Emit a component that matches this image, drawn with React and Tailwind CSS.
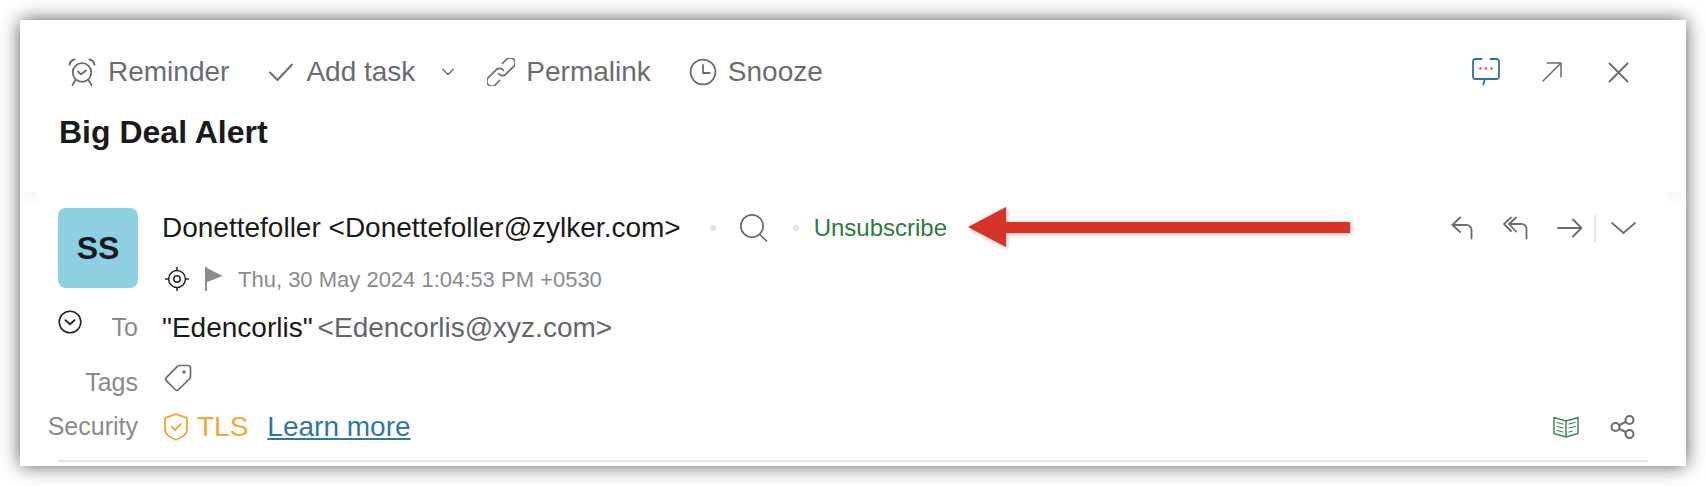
import React from 'react';

const iconGray = '#6b6c72';

const AlarmIcon = () => (
  <svg width="30" height="30" viewBox="0 0 30 30" fill="none" stroke={iconGray} strokeWidth="1.800" strokeLinecap="round" strokeLinejoin="round">
    <circle cx="15" cy="15.500" r="9.300" />
    <path d="M11 14.500l3 2.800 5-3.800" />
    <path d="M2.500 7.500C3 5 5 3 7.500 2.500M27.500 7.500C27 5 25 3 22.500 2.500" strokeWidth="2.100" />
    <path d="M8.500 23l-3 5M21.500 23l3 5" />
  </svg>
);

const CheckIcon = () => (
  <svg width="26" height="20" viewBox="0 0 26 20" fill="none" stroke={iconGray} strokeWidth="2" strokeLinecap="round" strokeLinejoin="round">
    <path d="M2 10.500l7.500 7.500L24 2.500" />
  </svg>
);

const SmallChevron = () => (
  <svg width="12" height="8" viewBox="0 0 12 8" fill="none" stroke={iconGray} strokeWidth="1.500" strokeLinecap="round" strokeLinejoin="round">
    <path d="M1 1.500l5 5 5-5" />
  </svg>
);

const LinkIcon = () => (
  <svg width="28" height="28" viewBox="0 0 28 28" fill="none" stroke={iconGray} strokeWidth="1.700" strokeLinecap="round" strokeLinejoin="round">
    <g transform="rotate(-45 14 14)">
      <path d="M17 14.500A5 5 0 0 0 12.500 9H1a5 5 0 0 0 0 10H7" />
      <path d="M11 13.500A5 5 0 0 0 15.500 19H27a5 5 0 0 0 0-10H21" />
    </g>
  </svg>
);

const ClockIcon = () => (
  <svg width="28" height="28" viewBox="0 0 28 28" fill="none" stroke={iconGray} strokeWidth="1.800" strokeLinecap="round" strokeLinejoin="round">
    <circle cx="14" cy="14" r="12.400" />
    <path d="M14 7v8h6.500" />
  </svg>
);

const ChatIcon = () => (
  <svg width="28" height="28" viewBox="0 0 28 28" fill="none">
    <path d="M9.500 1H3.500A2.500 2.500 0 0 0 1 3.500v15A2.500 2.500 0 0 0 3.500 21h9.500l-1.800 5.500M18.500 1h6A2.500 2.500 0 0 1 27 3.500v15a2.500 2.500 0 0 1-2.500 2.500H13" stroke="#2f6db5" strokeWidth="1.800" strokeLinecap="round" strokeLinejoin="round" />
    <circle cx="8.500" cy="10.500" r="1.300" fill="#ee4a42" />
    <circle cx="14" cy="10.500" r="1.300" fill="#ee4a42" />
    <circle cx="19.500" cy="10.500" r="1.300" fill="#ee4a42" />
  </svg>
);

const ExpandIcon = () => (
  <svg width="20" height="20" viewBox="0 0 20 20" fill="none" stroke={iconGray} strokeWidth="1.500" strokeLinecap="round" strokeLinejoin="round">
    <path d="M1 19L19 1M5 1h14v14" />
  </svg>
);

const CloseIcon = () => (
  <svg width="21" height="21" viewBox="0 0 21 21" fill="none" stroke={iconGray} strokeWidth="1.900" strokeLinecap="round">
    <path d="M1.500 1.500l18 18M19.500 1.500l-18 18" />
  </svg>
);

const SearchIcon = () => (
  <svg width="29" height="28" viewBox="0 0 29 28" fill="none" stroke={iconGray} strokeWidth="1.700" strokeLinecap="round">
    <circle cx="13" cy="12" r="11.200" />
    <path d="M21 20.500l6.500 6.500" />
  </svg>
);

const ReplyIcon = () => (
  <svg width="22" height="24" viewBox="0 0 22 24" fill="none" stroke={iconGray} strokeWidth="1.800" strokeLinecap="round" strokeLinejoin="round">
    <path d="M9 1.500L1.500 9l7.500 7" />
    <path d="M1.500 9H15a5 5 0 0 1 5.500 5v8.500" />
  </svg>
);

const ReplyAllIcon = () => (
  <svg width="25" height="24" viewBox="0 0 25 24" fill="none" stroke={iconGray} strokeWidth="1.800" strokeLinecap="round" strokeLinejoin="round">
    <path d="M8 1.500L1 8l7 7" />
    <path d="M13 1.500L6 8l7 7.500" />
    <path d="M6 8H18a5 5 0 0 1 5.500 5v9.500" />
  </svg>
);

const ForwardIcon = () => (
  <svg width="26" height="20" viewBox="0 0 26 20" fill="none" stroke={iconGray} strokeWidth="1.800" strokeLinecap="round" strokeLinejoin="round">
    <path d="M1 10h23.500M16 1.500l8.500 8.500-8.500 8.500" />
  </svg>
);

const WideChevron = () => (
  <svg width="25" height="12" viewBox="0 0 25 12" fill="none" stroke={iconGray} strokeWidth="1.700" strokeLinecap="round" strokeLinejoin="round">
    <path d="M1 1l11.500 10L24 1" />
  </svg>
);

const TargetIcon = () => (
  <svg width="26" height="26" viewBox="0 0 26 26" fill="none" stroke="#26272b" strokeWidth="1.500">
    <circle cx="13" cy="13" r="8.400" />
    <circle cx="13" cy="13" r="3.200" />
    <path d="M13 1v4M13 21v4M1 13h4M21 13h4" />
  </svg>
);

const FlagIcon = () => (
  <svg width="18" height="24" viewBox="0 0 18 24" fill="#8b8b8d">
    <path d="M0 0h2v24H0z" />
    <path d="M2 1l15.500 8L2 15z" />
  </svg>
);

const ExpandCircleIcon = () => (
  <svg width="24" height="24" viewBox="0 0 24 24" fill="none" stroke="#26272b" strokeWidth="1.600" strokeLinecap="round" strokeLinejoin="round">
    <circle cx="12" cy="12" r="10.800" />
    <path d="M7.500 10.200l4.500 4 4.500-4" strokeWidth="1.900" />
  </svg>
);

const TagIcon = () => (
  <svg width="28" height="28" viewBox="0 0 28 28" fill="none" stroke={iconGray} strokeWidth="1.700" strokeLinejoin="round">
    <path d="M15.500 1.500h8.500a2.500 2.500 0 0 1 2.500 2.500v8.500a3 3 0 0 1-.9 2.100L14.700 25.500a2.500 2.500 0 0 1-3.500 0L2.500 16.800a2.500 2.500 0 0 1 0-3.500L13.400 2.400a3 3 0 0 1 2.100-.9z" />
    <circle cx="20" cy="8" r="1.700" fill={iconGray} stroke="none" />
  </svg>
);

const ShieldIcon = () => (
  <svg width="24" height="28" viewBox="0 0 24 28" fill="none" stroke="#f5a73b" strokeWidth="1.900" strokeLinecap="round" strokeLinejoin="round">
    <path d="M12 1.200L23 5v11.500c0 4-4.500 7.800-11 10.300C5.500 24.300 1 20.500 1 16.500V5z" />
    <path d="M7.500 13.500l3.500 3.500 6-6" />
  </svg>
);

const BookIcon = () => (
  <svg width="26" height="22" viewBox="0 0 26 22" fill="none" stroke="#3f8a57" strokeWidth="1.500" strokeLinecap="round" strokeLinejoin="round">
    <path d="M13 5L1 1.500v16L13 21l12-3.500v-16L13 5v16" />
    <path d="M4 6.500l6 1.500M4 10.500l6 1.500M4 14.500l6 1.500M16 8l6-1.500M16 12l6-1.500M16 16l3-.8" strokeWidth="1.200" />
  </svg>
);

const ShareIcon = () => (
  <svg width="25" height="24" viewBox="0 0 25 24" fill="none" stroke={iconGray} strokeWidth="2.100">
    <circle cx="5.500" cy="12" r="4" />
    <circle cx="19.500" cy="5" r="4" />
    <circle cx="19.500" cy="19" r="4" />
    <path d="M9 10.200l7-3.400M9 13.800l7 3.400" />
  </svg>
);

const RedArrow = () => (
  <svg className="absolute left-[948px] top-[187px]" width="382" height="40" viewBox="0 0 382 40" style={{ filter: 'drop-shadow(1px 1px 2px rgba(0,0,0,0.35))' }}>
    <path d="M0 20L38 0v15l344 0v11L38 26v14z" fill="#d63426" />
  </svg>
);

const ToolItem = ({ icon, label, className = '' }) => (
  <div className={`flex items-center ${className}`}>
    {icon}
    <span>{label}</span>
  </div>
);

export default function App() {
  return (
    <div className="h-[486px] bg-white p-[20px] font-['Liberation_Sans',Arial,sans-serif]">
      <div className="relative h-[446px] bg-white pt-[34px] shadow-[0_0_18px_rgba(0,0,0,0.65)]">
        {/* Toolbar */}
        <div className="flex h-[36px] items-center justify-between pl-[47px] pr-[57px] text-[28px] text-[#6b6c72]">
          <div className="flex items-center">
            <ToolItem icon={<AlarmIcon />} label="Reminder" className="gap-[11px]" />
            <ToolItem icon={<CheckIcon />} label="Add task" className="ml-[39px] gap-[12px]" />
            <div className="ml-[27px]"><SmallChevron /></div>
            <div className="ml-[33px]">
              <ToolItem icon={<LinkIcon />} label="Permalink" className="gap-[11px]" />
            </div>
            <ToolItem icon={<ClockIcon />} label="Snooze" className="ml-[38px] gap-[11px]" />
          </div>
          <div className="flex items-center">
            <ChatIcon />
            <div className="ml-[42px]"><ExpandIcon /></div>
            <div className="ml-[46px]"><CloseIcon /></div>
          </div>
        </div>

        <h1 className="mt-[22px] flex h-[40px] items-center pl-[39px] text-[32px] font-bold text-[#1a1a1c]">Big Deal Alert</h1>

        {/* Sender */}
        <div className="mt-[56px] flex pl-[38px] pr-[50px]">
          <div className="flex h-[80px] w-[80px] items-center justify-center rounded-[8px] bg-[#8fcfe2] text-[32px] font-bold text-[#1a1a1c]">SS</div>
          <div className="ml-[24px] flex-1">
            <div className="flex h-[40px] items-center">
              <span className="text-[28px] text-[#1a1a1c]">Donettefoller &lt;Donettefoller@zylker.com&gt;</span>
              <span className="ml-[29px] h-[6px] w-[6px] rounded-full bg-[#e2e2e2]" />
              <div className="ml-[23px]"><SearchIcon /></div>
              <span className="ml-[25px] h-[6px] w-[6px] rounded-full bg-[#e2e2e2]" />
              <span className="ml-[15px] text-[24px] text-[#2f7a3f]">Unsubscribe</span>
              <div className="ml-auto flex items-center">
                <ReplyIcon />
                <div className="ml-[30px]"><ReplyAllIcon /></div>
                <div className="ml-[29px]"><ForwardIcon /></div>
                <div className="ml-[11px] h-[27px] w-[2px] bg-[#e6e6e6]" />
                <div className="ml-[15px]"><WideChevron /></div>
              </div>
            </div>
            <div className="mt-[16px] flex h-[30px] items-center pl-[2px]">
              <TargetIcon />
              <div className="ml-[15px]"><FlagIcon /></div>
              <span className="ml-[15px] text-[22px] text-[#8a8a8c]">Thu, 30 May 2024 1:04:53 PM +0530</span>
            </div>
          </div>
        </div>

        {/* Recipients */}
        <div className="mt-[18px] flex h-[32px] items-center pl-[38px]">
          <div className="flex w-[80px] items-center justify-between">
            <div className="-translate-y-[6px]"><ExpandCircleIcon /></div>
            <span className="text-[25px] text-[#8a8a8c]">To</span>
          </div>
          <span className="ml-[24px] text-[28px] text-[#1a1a1c]">"Edencorlis"</span>
          <span className="ml-[5px] text-[28px] text-[#65666c]">&lt;Edencorlis@xyz.com&gt;</span>
        </div>

        <div className="mt-[22px] flex h-[32px] items-center pl-[38px]">
          <span className="w-[80px] translate-y-[1px] text-right text-[25px] text-[#8a8a8c]">Tags</span>
          <div className="ml-[26px] -translate-y-[4px]"><TagIcon /></div>
        </div>

        {/* Security */}
        <div className="mt-[13px] flex h-[32px] items-center pl-[10px] pr-[51px]">
          <span className="w-[108px] text-right text-[25px] text-[#8a8a8c]">Security</span>
          <div className="ml-[26px]"><ShieldIcon /></div>
          <span className="ml-[9px] text-[28px] text-[#f5a73b]">TLS</span>
          <a className="ml-[19px] text-[28px] text-[#2e77a8] underline">Learn more</a>
          <div className="ml-auto flex items-center">
            <BookIcon />
            <div className="ml-[31px]"><ShareIcon /></div>
          </div>
        </div>

        <div className="ml-[38px] mr-[38px] mt-[17px] h-[2px] bg-[#e4e4e4]" />

        <RedArrow />
        {/* faint patches in the source capture */}
        <div className="absolute left-[4px] top-[172px] h-[14px] w-[14px] bg-gradient-to-b from-[#f6f6f6] to-white" />
        <div className="absolute right-[4px] top-[172px] h-[14px] w-[14px] bg-gradient-to-b from-[#f6f6f6] to-white" />
      </div>
    </div>
  );
}
